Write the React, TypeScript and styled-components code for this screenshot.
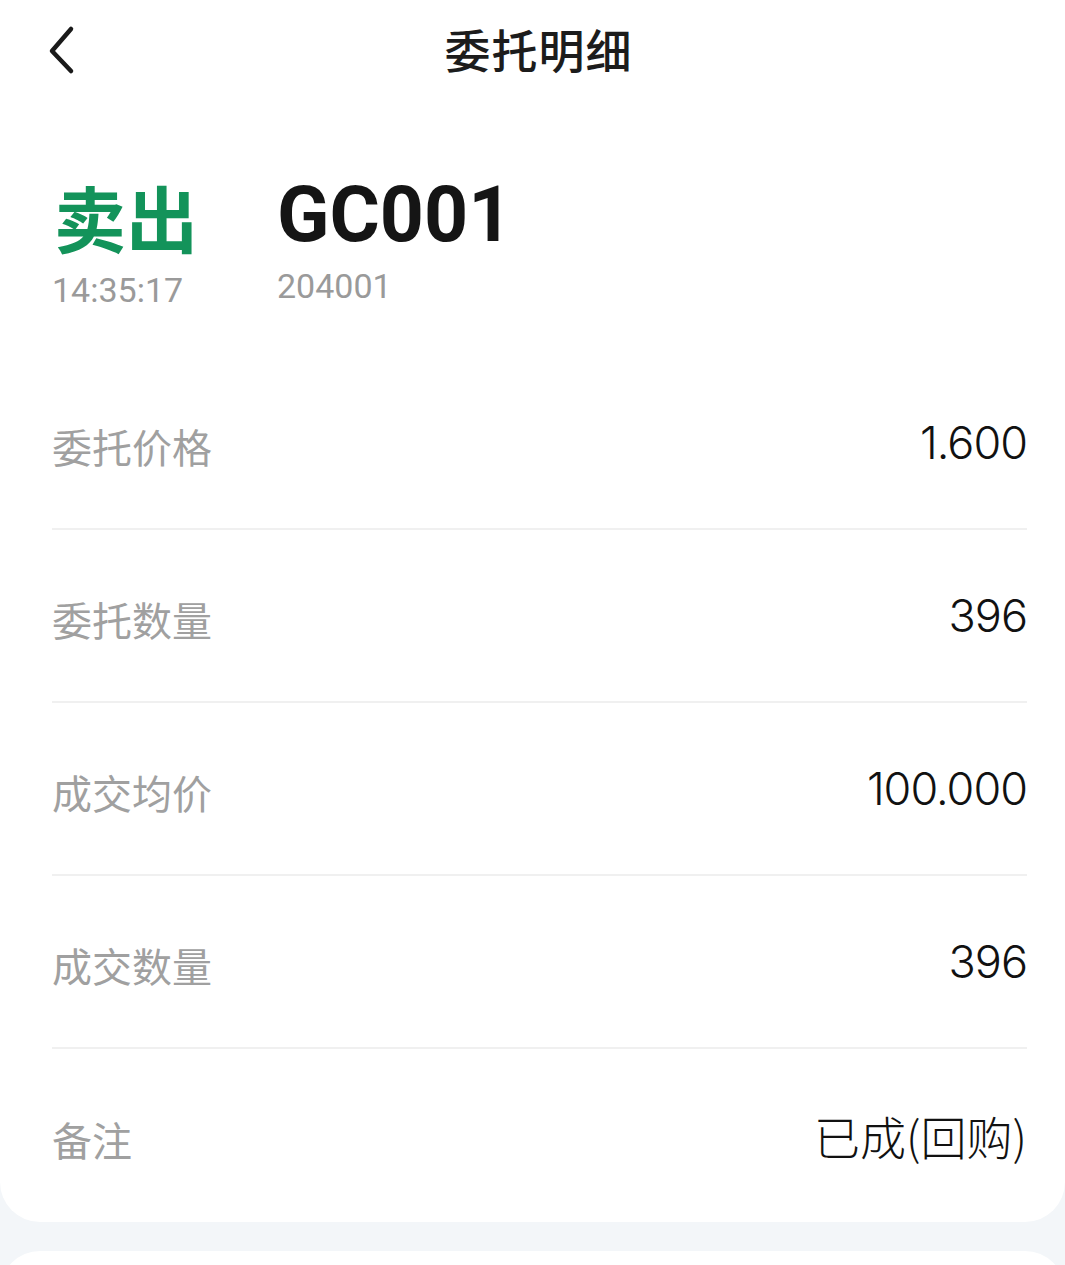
import React from 'react';
import styled, { createGlobalStyle } from 'styled-components';

const GlobalStyle = createGlobalStyle`
  html, body {
    margin: 0;
    padding: 0;
    background: #f3f6f9;
    font-family: "Noto Sans CJK SC", "Noto Sans", sans-serif;
  }
`;

const Page = styled.div`
  width: 1065px;
  height: 1265px;
  overflow: hidden;
  background: #f3f6f9;
`;

const Card = styled.div`
  background: #fff;
  border-radius: 0 0 40px 40px;
  padding: 0 38px 0 52px;
`;

const NavBar = styled.div`
  position: relative;
  height: 100px;
  display: flex;
  align-items: center;
  justify-content: center;
`;

const BackButton = styled.button`
  position: absolute;
  left: -11px;
  top: 24px;
  width: 40px;
  height: 52px;
  border: 0;
  padding: 0;
  background: transparent;
  display: flex;
  align-items: center;
  justify-content: center;
`;

const Title = styled.h1`
  margin: 0 0 4px;
  font-size: 46px;
  font-weight: 500;
  color: #1c1c1c;
  letter-spacing: 1px;
  transform: translateX(-1px);
`;

const Header = styled.div`
  display: flex;
  align-items: flex-start;
  padding-top: 74px;
  height: 257px;
  box-sizing: border-box;
`;

const SideBlock = styled.div`
  width: 225px;
  display: flex;
  flex-direction: column;
`;

const Direction = styled.div<{ $color: string }>`
  font-size: 72px;
  font-weight: 600;
  line-height: 84px;
  color: ${p => p.$color};
  margin-left: 2px;
`;

const CodeBlock = styled.div`
  display: flex;
  flex-direction: column;
`;

const Code = styled.div`
  font-family: Roboto, "Liberation Sans", sans-serif;
  font-size: 77px;
  font-weight: 700;
  line-height: 78px;
  color: #151515;
  margin-top: 2px;
`;

const SubText = styled.div<{ $top: number }>`
  font-family: Roboto, "Liberation Sans", sans-serif;
  font-size: 34px;
  color: #9a9a9a;
  line-height: 40px;
  margin-top: ${p => p.$top}px;
`;

const Row = styled.div<{ $last?: boolean }>`
  height: 173px;
  display: flex;
  align-items: center;
  justify-content: space-between;
  border-bottom: ${p => (p.$last ? 'none' : '2px solid #f0f0f0')};
  box-sizing: border-box;
`;

const Label = styled.span`
  font-size: 40px;
  color: #a0a0a0;
  margin-top: 6px;
`;

const Value = styled.span<{ $cjk?: boolean }>`
  font-family: ${p => (p.$cjk ? '"Noto Sans CJK SC", sans-serif' : 'Inter, "Noto Sans", sans-serif')};
  font-size: ${p => (p.$cjk ? '46px' : '45px')};
  letter-spacing: ${p => (p.$cjk ? '0' : '-1px')};
  font-weight: 300;
  color: #111;
  margin-top: ${p => (p.$cjk ? '-2px' : '0')};
`;

const NextCard = styled.div`
  margin-top: 29px;
  height: 60px;
  background: #fff;
  border-radius: 40px 40px 0 0;
`;

const rows = [
  { label: '委托价格', value: '1.600' },
  { label: '委托数量', value: '396' },
  { label: '成交均价', value: '100.000' },
  { label: '成交数量', value: '396' },
  { label: '备注', value: '已成(回购)', cjk: true },
];

const ChevronLeft = () => (
  <svg width="30" height="50" viewBox="0 0 30 50" fill="none">
    <path d="M25 4 L6 26 L25 46" stroke="#1a1a1a" strokeWidth="4.5" strokeLinecap="round" strokeLinejoin="round" />
  </svg>
);

export default function App() {
  return (
    <Page>
      <GlobalStyle />
      <Card>
        <NavBar>
          <BackButton type="button">
            <ChevronLeft />
          </BackButton>
          <Title>委托明细</Title>
        </NavBar>
        <Header>
          <SideBlock>
            <Direction $color="#13935a">卖出</Direction>
            <SubText $top={12}>14:35:17</SubText>
          </SideBlock>
          <CodeBlock>
            <Code>GC001</Code>
            <SubText $top={12}>204001</SubText>
          </CodeBlock>
        </Header>
        {rows.map((r, i) => (
          <Row key={r.label} $last={i === rows.length - 1}>
            <Label>{r.label}</Label>
            <Value $cjk={r.cjk}>{r.value}</Value>
          </Row>
        ))}
      </Card>
      <NextCard />
    </Page>
  );
}
